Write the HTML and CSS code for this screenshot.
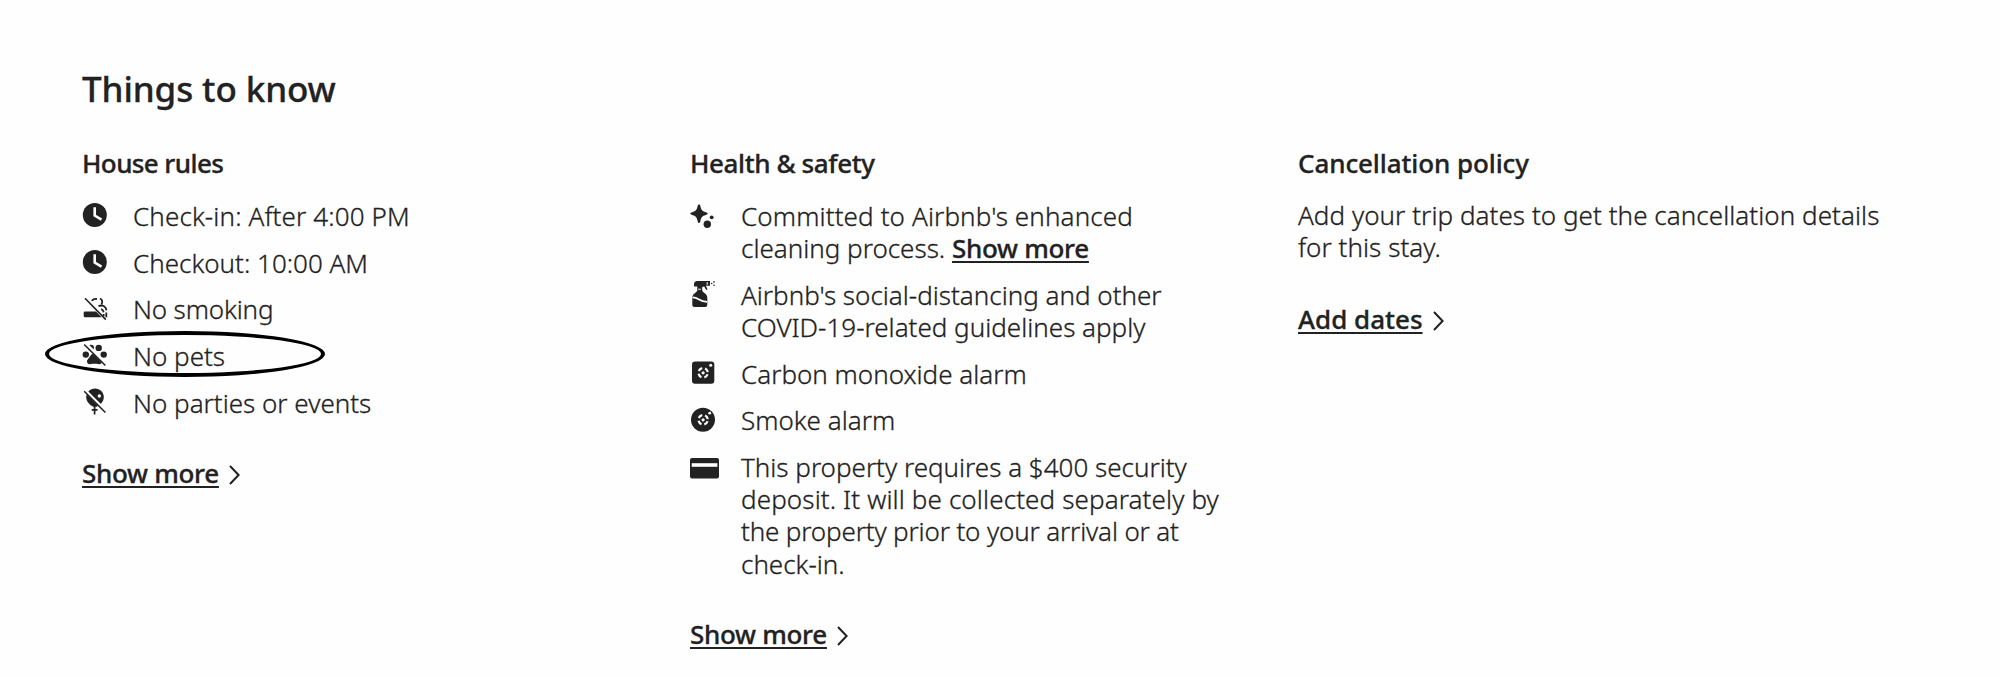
FILE: index.html
```html
<!DOCTYPE html>
<html lang="en">
<head>
    <meta charset="UTF-8">
    <meta name="viewport" content="width=device-width, initial-scale=1.0">
    <title>Things to know</title>
    <link rel="stylesheet" href="styles.css">
</head>
<body>
    <section class="things">
        <h2>Things to know</h2>
        <div class="columns">
            <div class="column">
                <h3 class="tight">House rules</h3>
                <ul>
                    <li>
                        <svg class="icon" viewBox="0 0 26 26"><circle cx="12.8" cy="13" r="12"/><path class="cut" d="M12.7 5.3v8.2l6.8 4.1" stroke-width="2.6"/></svg>
                        <span class="wide">Check-in: After 4:00 PM</span>
                    </li>
                    <li>
                        <svg class="icon" viewBox="0 0 26 26"><circle cx="12.8" cy="13" r="12"/><path class="cut" d="M12.7 5.3v8.2l6.8 4.1" stroke-width="2.6"/></svg>
                        <span>Checkout: 10:00 AM</span>
                    </li>
                    <li>
                        <svg class="icon" viewBox="0 0 26 26">
                            <path d="M3 15.5h11l5.6 5.8H3q-1.3 0-1.3-1.3v-3.2q0-1.3 1.3-1.3z"/>
                            <path class="line" d="M9.8 4.8Q11.5 2.5 15 3M18 2.5q3.6 2 1.4 5.8M16.5 10.3c3.5-2 7.5 0 8 4M19 13.2q2.2.5 2.7 3M21.6 18v2.2M24.3 16.5v4.7" stroke-width="1.8"/>
                            <path class="line" d="M3 2.2l20.8 21.4" stroke-width="1.6"/>
                        </svg>
                        <span class="snug">No smoking</span>
                    </li>
                    <li>
                        <svg class="icon" viewBox="0 0 26 26">
                            <circle cx="3.8" cy="12.6" r="3.2"/><circle cx="9" cy="5.8" r="3"/><circle cx="16.7" cy="5.9" r="3.2"/><circle cx="21.7" cy="12.6" r="3.2"/>
                            <path d="M12.5 11.5c3.5 0 4 3 6.5 5.3 2.5 2.5.7 5.6-2 5.4-3-.6-6-.6-9 0-3 0-4-3-1.8-5.4 2.3-2.3 2.800-5.3 6.3-5.3z"/>
                            <path class="cut" d="M3 1.3l21.3 21.3" stroke-width="3.6"/>
                            <path class="line" d="M2.2 2.5l21.2 21" stroke-width="1.6"/>
                        </svg>
                        <span>No pets</span>
                        <div class="circled"></div>
                    </li>
                    <li>
                        <svg class="icon" viewBox="0 0 26 26">
                            <path d="M13 -.5c5 0 8.8 3.8 8.8 8.6 0 5-4 8.2-7.2 9.6h-3.4C8 16.3 4.2 13 4.2 8.1 4.2 3.3 8 -.5 13 -.5z"/>
                            <circle class="hole" cx="17.3" cy="7" r="1.7"/>
                            <path class="line" d="M12.6 17v8.6M9.7 20.8h5.8" stroke-width="1.7"/>
                            <path class="cut" d="M3 1.3l21.3 21.3" stroke-width="3.2"/>
                            <path class="line" d="M2.2 2.3l21.2 21.2" stroke-width="1.6"/>
                        </svg>
                        <span>No parties or events</span>
                    </li>
                </ul>
                <a class="more" href="#"><span>Show more</span><svg class="chevron" viewBox="0 0 11 20"><path d="M1 1l8.6 9L1 19"/></svg></a>
            </div>

            <div class="column">
                <h3>Health &amp; safety</h3>
                <ul>
                    <li>
                        <svg class="icon" viewBox="0 0 26 26"><path d="M9 2.3q.9 0 1.3 1.5c.8 3.8 1.7 5.5 5.5 6.4q2 .5 2 1.4t-2 1.4c-3.8.9-4.7 2.6-5.5 6.4Q9.9 21 9 21t-1.3-1.6C6.900 15.6 6 13.9 2.2 13q-2-.5-2-1.4t2-1.4C6 9.3 6.9 7.6 7.7 3.8Q8.1 2.3 9 2.3z"/><circle cx="17.3" cy="22.3" r="3.7"/><circle cx="21.7" cy="15.3" r="1.9"/></svg>
                        <span><span class="wide">Committed to Airbnb's enhanced</span><br>cleaning process. <a href="#">Show more</a></span>
                    </li>
                    <li>
                        <svg class="icon" viewBox="0 0 26 26">
                            <path d="M6.5 0H20v4.8h-4.2l1.8 3.4-1.4.7-2-3.3-2 .4v3.2c0 2.6 5.1 2.6 5.1 7.5V24q0 2-2 2h-11q-2 0-2-2v-7.3c0-4.9 5-4.9 5-7.5V5.5H4V3Q4 .5 6.5 0z"/>
                            <path class="cut" d="M2.5 16.3c3 0 4.5.8 6.5 2.2s4.5 2.3 8 2.3" stroke-width="1.7"/>
                            <path class="cut" d="M8.2 8.3h2.6M17.2 1.3v2.5" stroke-width="1.1"/>
                            <circle cx="21.7" cy="2.5" r=".8"/><circle cx="24" cy=".9" r=".8"/><circle cx="24" cy="4.3" r=".8"/>
                        </svg>
                        <span>Airbnb's social-distancing and other<br>COVID-19-related guidelines apply</span>
                    </li>
                    <li>
                        <svg class="icon" viewBox="0 0 26 26"><rect x="2" y="1.5" width="22.3" height="22.3" rx="3"/><circle class="cut vent" cx="13.1" cy="12.8" r="4.7"/><circle class="hole" cx="13.1" cy="12.8" r="1.6"/><circle class="hole" cx="20.7" cy="5.2" r="1.5"/></svg>
                        <span>Carbon monoxide alarm</span>
                    </li>
                    <li>
                        <svg class="icon" viewBox="0 0 26 26"><circle cx="13" cy="12.7" r="12"/><circle class="cut vent" cx="13.1" cy="12.8" r="4.7"/><circle class="hole" cx="13.1" cy="12.8" r="1.6"/><circle class="hole" cx="19.7" cy="6.2" r="1.4"/></svg>
                        <span>Smoke alarm</span>
                    </li>
                    <li>
                        <svg class="icon" viewBox="0 0 26 26"><rect x="0" y="5" width="29" height="20.5" rx="2"/><path class="cut" d="M1.7 12h25.7" stroke-width="3.6"/></svg>
                        <span>This property requires a $400 security<br><span class="wide">deposit. It will be collected separately by</span><br><span class="snug">the property prior to your arrival or at</span><br>check-in.</span>
                    </li>
                </ul>
                <a class="more" href="#"><span>Show more</span><svg class="chevron" viewBox="0 0 11 20"><path d="M1 1l8.6 9L1 19"/></svg></a>
            </div>

            <div class="column">
                <h3 class="policy">Cancellation policy</h3>
                <p>Add your trip dates to get the cancellation details<br>for this stay.</p>
                <a class="more dates" href="#"><span>Add dates</span><svg class="chevron" viewBox="0 0 11 20"><path d="M1 1l8.6 9L1 19"/></svg></a>
            </div>
        </div>
    </section>
</body>
</html>
```
FILE: styles.css
```css
body {
    margin: 0;
    background-color: #fefefe;
    color: #222;
    font-family: 'Noto Sans', sans-serif;
    font-size: 26px;
    font-weight: 300;
    line-height: 32.2px;
    -webkit-text-stroke: 0.3px #222;
}

.things {
    padding: 68.4px 0 0 82px;
}

h2 {
    margin: 0 0 36.6px;
    font-size: 35px;
    font-weight: 500;
    line-height: 42px;
    letter-spacing: -0.1px;
}

.columns {
    display: grid;
    grid-template-columns: repeat(3, 608px);
}

h3 {
    margin: 0 0 21px;
    font-size: 26px;
    font-weight: 500;
    line-height: 32.2px;
    letter-spacing: -0.4px;
}

h3.tight {
    letter-spacing: -0.6px;
}

h3.policy {
    letter-spacing: -0.1px;
}

ul {
    display: flex;
    flex-direction: column;
    gap: 14.4px;
    margin: 0;
    padding: 0;
    list-style: none;
}

li {
    position: relative;
    display: flex;
    gap: 25px;
    white-space: nowrap;
}

p {
    margin: -1px 0 0;
    letter-spacing: 0.05px;
    white-space: nowrap;
}

a {
    color: inherit;
    font-weight: 500;
    letter-spacing: -0.3px;
    text-decoration: underline;
    text-decoration-thickness: 1.6px;
    text-underline-offset: 3px;
}

.snug {
    letter-spacing: -0.15px;
}

.wide {
    letter-spacing: 0.12px;
}

.icon {
    flex: none;
    width: 26px;
    height: 26px;
    margin-top: 2.2px;
    overflow: visible;
    fill: #222;
}

.cut {
    fill: none;
    stroke: #fefefe;
}

.line {
    fill: none;
    stroke: #222;
}

.hole {
    fill: #fefefe;
}

/* four slots around the sensor */
.vent {
    stroke-width: 2.2;
    stroke-dasharray: 4.4 2.983;
    stroke-dashoffset: -1.5;
}

.more {
    display: flex;
    align-items: center;
    gap: 10px;
    width: max-content;
    margin-top: 38.6px;
    text-decoration: none;
}

.more span {
    text-decoration: underline;
    text-decoration-thickness: 1.6px;
    text-underline-offset: 3px;
}

.dates {
    margin-top: 39.6px;
    letter-spacing: 0;
}

.chevron {
    width: 11px;
    height: 20px;
    margin-top: 4px;
    fill: none;
    stroke: #222;
    stroke-width: 2;
}

/* hand-drawn ring round the pets rule */
.circled {
    position: absolute;
    top: -9px;
    left: -37.3px;
    box-sizing: border-box;
    width: 280px;
    height: 46px;
    border: 4px solid #000;
    border-radius: 50%;
}
```
